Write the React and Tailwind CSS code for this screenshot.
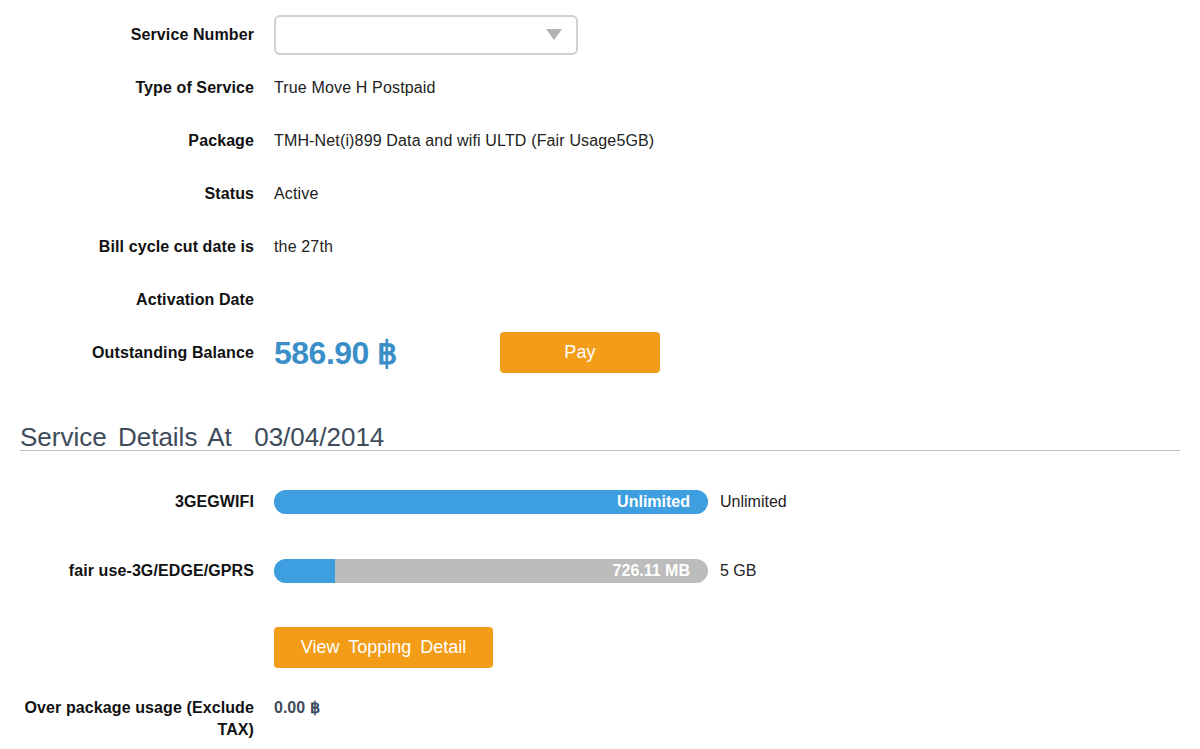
import React from "react";

const font = { fontFamily: '"Liberation Sans", Arial, sans-serif' };

const InfoRow = ({ label, children }) => {
  return (
    <div className="flex h-[53px] items-center">
      <div className="w-[254px] text-right text-[16px] font-bold tracking-[0.1px] text-[#111]">
        {label}
      </div>
      <div className="ml-[20px] flex items-center text-[16px] tracking-[0.15px] text-[#222]">
        {children}
      </div>
    </div>
  );
};

const UsageBar = ({ label, text, total, percent }) => {
  return (
    <div className="flex h-[40px] items-center">
      <div className="w-[254px] text-right text-[16px] font-bold tracking-[0.1px] text-[#111]">
        {label}
      </div>
      <div className="relative ml-[20px] h-[24px] w-[434px] overflow-hidden rounded-full bg-[#bcbcbc]">
        <div
          className="absolute inset-y-0 left-0 bg-[#3d9fe0]"
          style={{ width: `${percent}%` }}
        ></div>
        <div className="relative flex h-full items-center justify-end pr-[18px] text-[16px] font-bold text-white">
          {text}
        </div>
      </div>
      <div className="ml-[12px] text-[16px] text-[#222]">{total}</div>
    </div>
  );
};

const App = () => {
  return (
    <div className="min-h-[749px] w-[1200px] bg-white pt-[8px]" style={font}>
      <InfoRow label="Service Number">
        <div className="relative h-[40px] w-[304px] rounded-md border-2 border-[#cfcfcf] bg-white">
          <svg
            className="absolute right-[14px] top-[12px]"
            width="16"
            height="11"
            viewBox="0 0 16 11"
          >
            <polygon points="0,0 16,0 8,11" fill="#b3b3b3" />
          </svg>
        </div>
      </InfoRow>
      <InfoRow label="Type of Service">True Move H Postpaid</InfoRow>
      <InfoRow label="Package">
        TMH-Net(i)899 Data and wifi ULTD (Fair Usage5GB)
      </InfoRow>
      <InfoRow label="Status">Active</InfoRow>
      <InfoRow label="Bill cycle cut date is">the 27th</InfoRow>
      <InfoRow label="Activation Date"></InfoRow>
      <InfoRow label="Outstanding Balance">
        <div className="w-[226px] text-[32px] font-bold tracking-[-0.5px] text-[#3a8fc8]">
          586.90 ฿
        </div>
        <button className="h-[41px] w-[160px] rounded-[4px] bg-[#f39c17] text-[18px] text-white">
          Pay
        </button>
      </InfoRow>

      {/* Service details */}
      <div className="mx-[20px] mt-[43px] h-[29px] border-b border-[#bdbdbd] text-[26px] leading-[30px] text-[#3e4b5b] [word-spacing:4px]">
        Service Details At &nbsp;03/04/2014
      </div>

      <div className="mt-[31px]">
        <UsageBar label="3GEGWIFI" text="Unlimited" total="Unlimited" percent={100} />
      </div>
      <div className="mt-[29px]">
        <UsageBar
          label="fair use-3G/EDGE/GPRS"
          text="726.11 MB"
          total="5 GB"
          percent={14}
        />
      </div>

      <div className="mt-[36px] pl-[274px]">
        <button className="h-[41px] w-[219px] rounded-[4px] bg-[#f39c17] text-[18px] text-white [word-spacing:4px]">
          View Topping Detail
        </button>
      </div>

      <div className="mt-[29px] flex">
        <div className="ml-[20px] w-[234px] text-right text-[16px] font-bold leading-[22px] tracking-[0.1px] text-[#111]">
          Over package usage (Exclude TAX)
        </div>
        <div className="ml-[20px] text-[16px] font-bold leading-[22px] text-[#3e4b5b]">
          0.00 ฿
        </div>
      </div>
    </div>
  );
};

export default App;
